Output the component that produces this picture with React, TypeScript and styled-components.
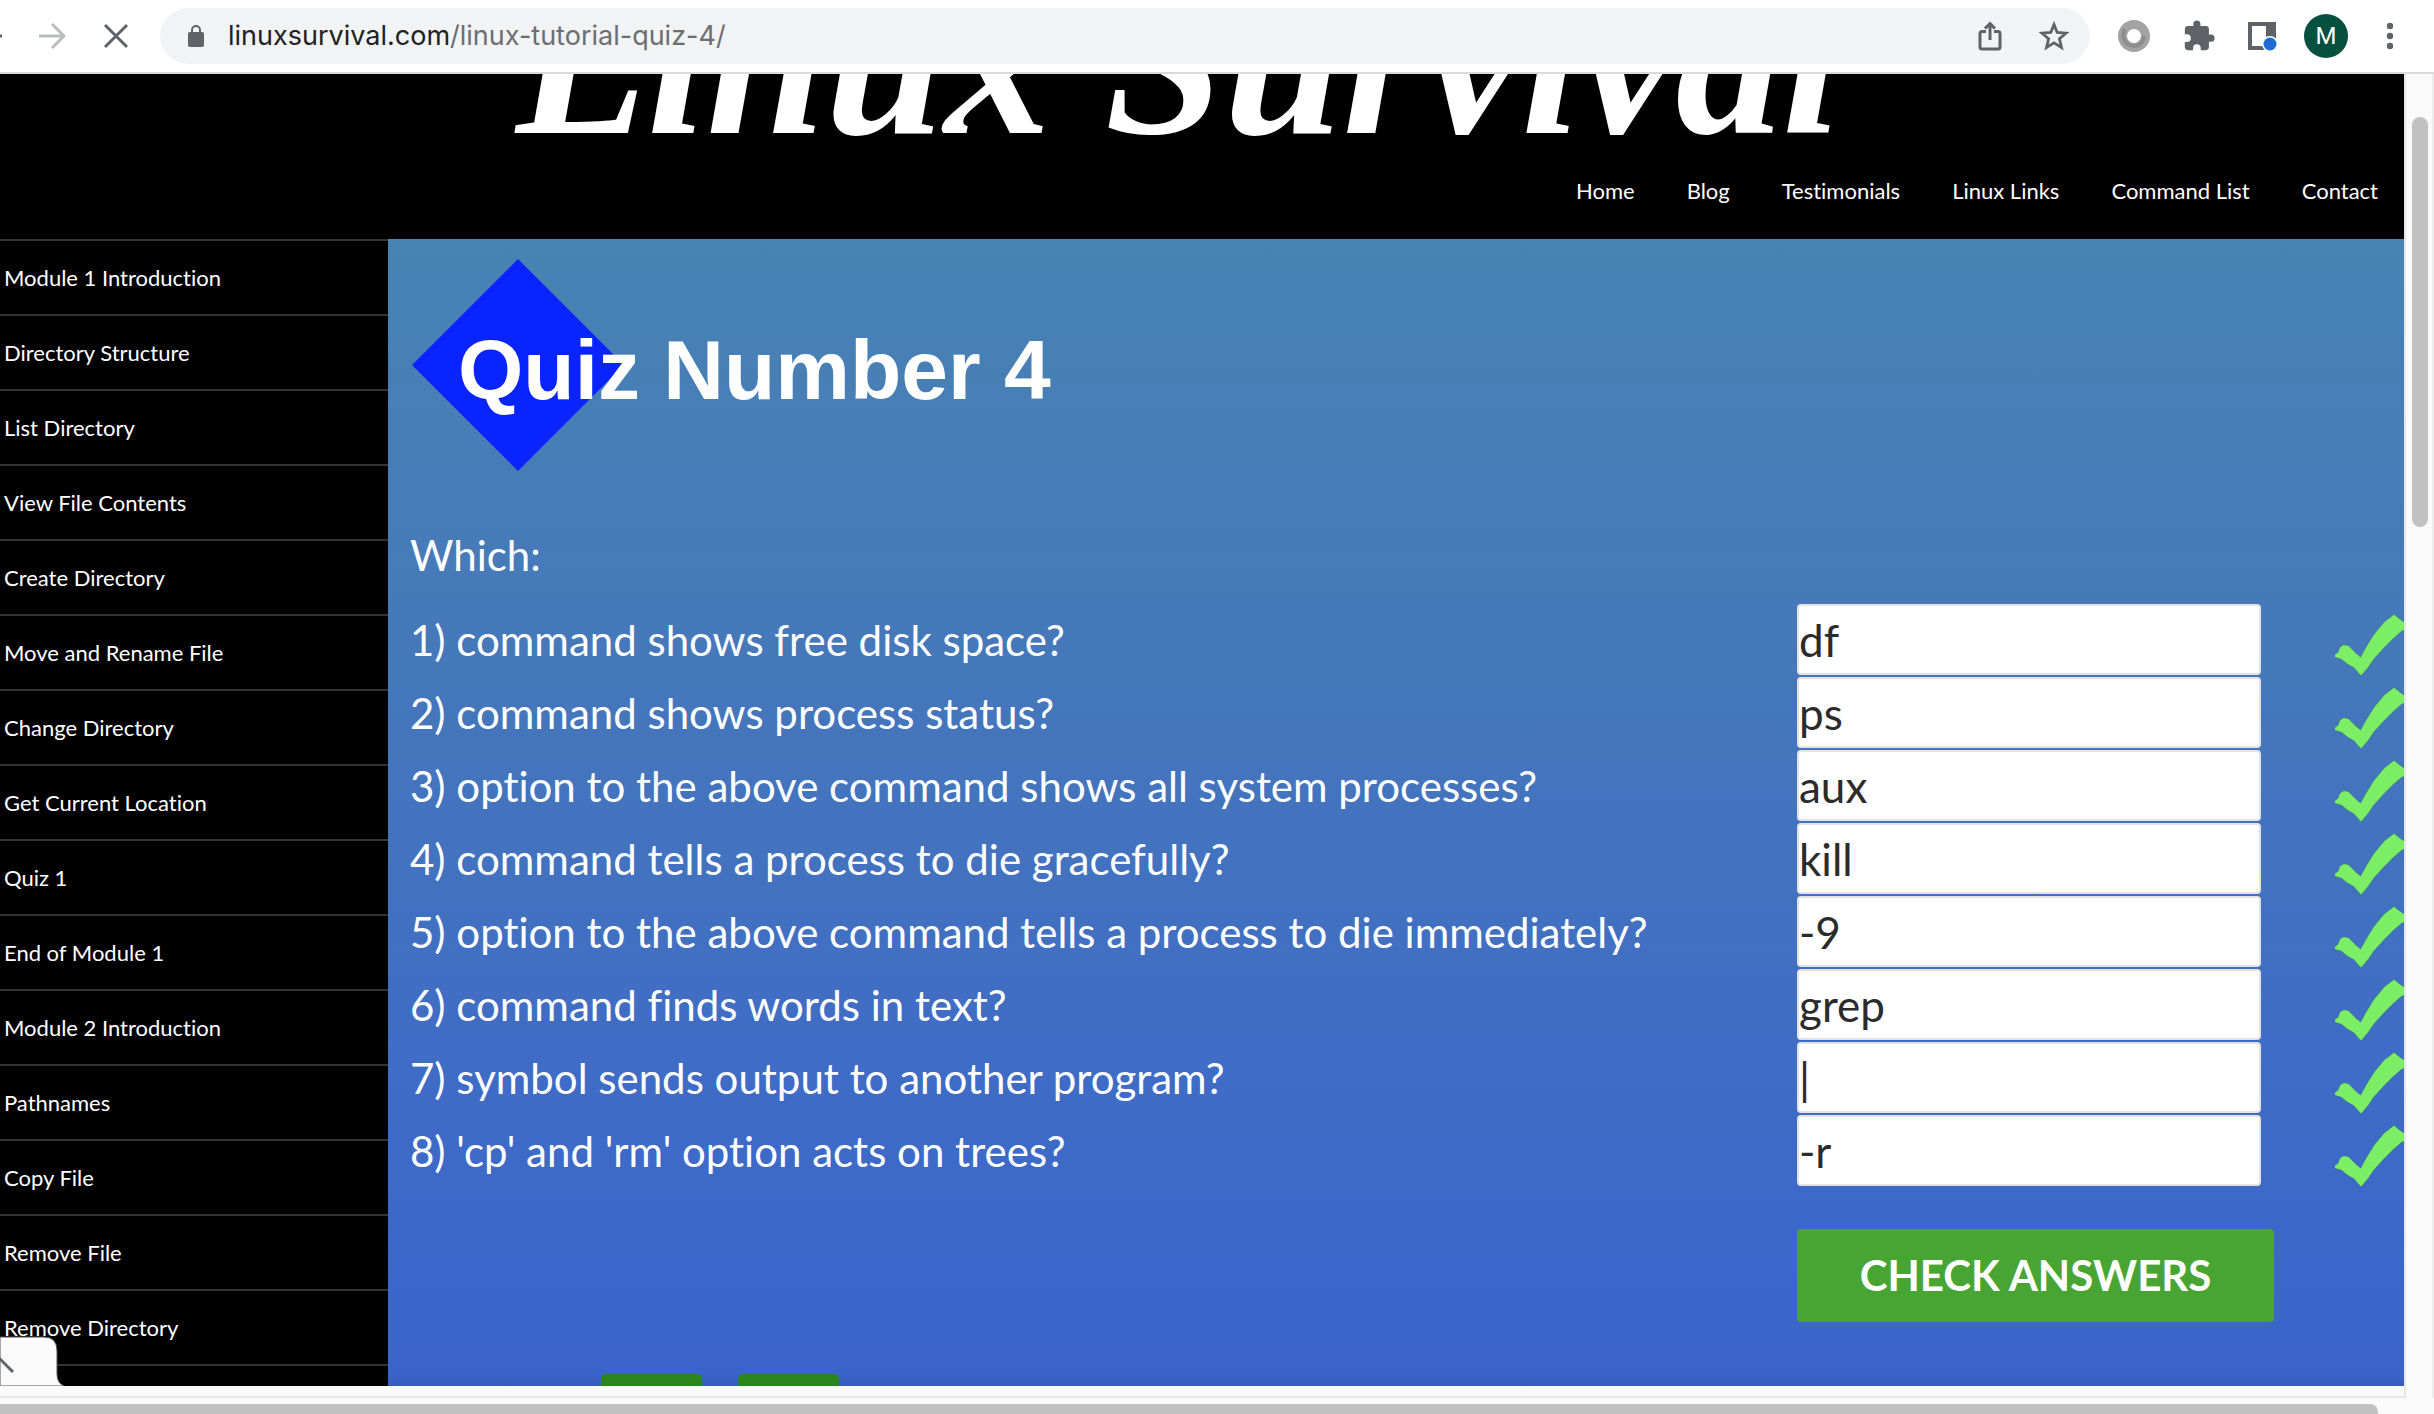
import React from "react";
import styled, { createGlobalStyle } from "styled-components";

const GlobalStyle = createGlobalStyle`
  *, *::before, *::after { box-sizing: border-box; }
  html, body { margin: 0; background: #fff; }
  body {
    font-family: Lato, "Open Sans", sans-serif;
    font-variant-ligatures: no-common-ligatures;
  }
`;

const Window = styled.div`
  display: flex;
  flex-direction: column;
  height: 100vh;
  overflow: hidden;
  background: #fafafa;
`;

/* ---------- browser toolbar ---------- */

const Toolbar = styled.div`
  flex: none;
  display: flex;
  align-items: center;
  height: 74px;
  padding-right: 40px;
  border-bottom: 2px solid #dadada;
  background: #fff;
`;

const IconButton = styled.button<{ $width: number }>`
  flex: none;
  display: flex;
  align-items: center;
  justify-content: center;
  width: ${(p) => p.$width}px;
  height: 56px;
  padding: 0;
  border: 0;
  background: none;
  color: #5f6368;
`;

const AddressBar = styled.div`
  flex: 1;
  display: flex;
  align-items: center;
  min-width: 0;
  height: 56px;
  margin: 0 12px 0 6px;
  padding: 0 4px 0 28px;
  border-radius: 28px;
  background: #f1f3f4;
`;

const Url = styled.span`
  flex: 1;
  margin-left: 24px;
  font: 27px/36px Inter, Roboto, sans-serif;
  color: #6b6e72;
  white-space: nowrap;
`;

const Domain = styled.span`
  color: #202124;
`;

const Avatar = styled.button`
  flex: none;
  width: 44px;
  height: 44px;
  margin: 0 38px 0 10px;
  padding: 0;
  border: 0;
  border-radius: 50%;
  background: #074f3f;
  color: #fff;
  font: 24px/44px Roboto, sans-serif;
`;

/* ---------- viewport with its scrollbars ---------- */

const Viewport = styled.div`
  flex: 1;
  display: flex;
  min-height: 0;
`;

const PageFrame = styled.div`
  position: relative;
  flex: 1;
  display: flex;
  flex-direction: column;
  min-width: 0;
  padding-bottom: 10px;
  border: solid #e8e8e8;
  border-width: 0 2px 2px 0;
`;

const Page = styled.div`
  flex: 1;
  display: flex;
  flex-direction: column;
  min-height: 0;
  overflow: hidden;
  background: #000;
`;

const VerticalTrack = styled.div`
  flex: none;
  width: 28px;
  padding: 43px 4px 0 6px;
  border-right: 2px solid #ececec;
`;

const VerticalThumb = styled.div`
  width: 16px;
  height: 410px;
  border-radius: 8px;
  background: #c1c1c1;
`;

const HorizontalTrack = styled.div`
  flex: none;
  height: 16px;
  padding: 6px 56px 0 0;
  overflow: hidden;
`;

const HorizontalThumb = styled.div`
  height: 16px;
  border-radius: 0 8px 8px 0;
  background: #c1c1c1;
`;

/* ---------- site header ---------- */

const SiteHeader = styled.header`
  flex: none;
  display: flex;
  flex-direction: column;
  justify-content: space-between;
  height: 165px;
  overflow: hidden;
`;

const Banner = styled.h1`
  margin: -120px 0 0;
  padding-right: 46px;
  text-align: center;
  font: italic bold 214px/214px "Liberation Serif", serif;
  color: #fff;
  white-space: nowrap;
`;

const Nav = styled.nav`
  display: flex;
  justify-content: flex-end;
  gap: 52px;
  padding: 0 26px 34px 0;
`;

const NavLink = styled.a`
  font-size: 22px;
  line-height: 28px;
  color: #fff;
  text-decoration: none;
`;

/* ---------- body ---------- */

const Columns = styled.div`
  flex: 1;
  display: flex;
  min-height: 0;
`;

const Sidebar = styled.nav`
  flex: none;
  width: 388px;
  overflow: hidden;
`;

const SideList = styled.ul`
  margin: 0;
  padding: 0;
  list-style: none;
`;

const SideItem = styled.li`
  height: 75px;
  border-top: 2px solid #333;
`;

const SideLink = styled.a`
  display: block;
  padding-left: 4px;
  font-size: 22px;
  line-height: 73px;
  color: #fff;
  text-decoration: none;
`;

const Main = styled.main`
  flex: 1;
  display: flex;
  flex-direction: column;
  min-width: 0;
  overflow: hidden;
  padding: 20px 0 0 22px;
  background: linear-gradient(#4883b3, #4679b9 32%, #4270c1 60%, #3b66cb 90%, #3a64ca 99%, #355dbc);
  color: #fff;
`;

const QuizTitle = styled.h2`
  display: flex;
  align-items: center;
  height: 212px;
  margin: 0 0 58px 2px;
`;

const Diamond = styled.svg`
  flex: none;
  width: 212px;
  height: 212px;
`;

const QuizTitleText = styled.span`
  margin-left: -166px;
  padding-top: 10px;
  font: bold 84px/92px "Liberation Sans", Arial, sans-serif;
  white-space: nowrap;
`;

const Lead = styled.p`
  margin: 0 0 22px;
  font-size: 42px;
  line-height: 53px;
`;

const QuizForm = styled.form`
  display: grid;
  grid-template-columns: minmax(0, 1fr) 464px 143px;
  grid-auto-rows: 71px;
  row-gap: 2px;
`;

const Question = styled.label`
  font-size: 42px;
  line-height: 73px;
  white-space: nowrap;
`;

const Answer = styled.input`
  width: 100%;
  height: 71px;
  padding: 0;
  border: 2px solid #e3e3e3;
  border-radius: 4px;
  background: #fff;
  color: #2b2b2b;
  font: 44px/60px Lato, sans-serif;
  outline: 0;
`;

const CheckMark = styled.svg`
  justify-self: end;
  width: 69px;
  height: 71px;
`;

const CheckButton = styled.button`
  grid-column: 2 / 4;
  justify-self: start;
  width: 477px;
  height: 93px;
  margin-top: 41px;
  padding: 0;
  border: 0;
  border-radius: 4px;
  background: #49a533;
  color: #fff;
  font: bold 42px/93px Lato, sans-serif;
`;

const Pager = styled.div`
  display: flex;
  gap: 36px;
  margin: 115px 0 0 191px;
`;

const PagerButton = styled.button`
  width: 101px;
  height: 60px;
  border: 0;
  border-radius: 5px;
  background: #2a861c;
`;

const StatusCorner = styled.svg`
  position: absolute;
  left: 0;
  bottom: 10px;
  width: 66px;
  height: 50px;
`;

const navLinks = ["Home", "Blog", "Testimonials", "Linux Links", "Command List", "Contact"];

const modules = [
  "Module 1 Introduction",
  "Directory Structure",
  "List Directory",
  "View File Contents",
  "Create Directory",
  "Move and Rename File",
  "Change Directory",
  "Get Current Location",
  "Quiz 1",
  "End of Module 1",
  "Module 2 Introduction",
  "Pathnames",
  "Copy File",
  "Remove File",
  "Remove Directory",
  "",
];

const questions = [
  { text: "1) command shows free disk space?", answer: "df" },
  { text: "2) command shows process status?", answer: "ps" },
  { text: "3) option to the above command shows all system processes?", answer: "aux" },
  { text: "4) command tells a process to die gracefully?", answer: "kill" },
  { text: "5) option to the above command tells a process to die immediately?", answer: "-9" },
  { text: "6) command finds words in text?", answer: "grep" },
  { text: "7) symbol sends output to another program?", answer: "|" },
  { text: "8) 'cp' and 'rm' option acts on trees?", answer: "-r" },
];

function BrowserToolbar() {
  return (
    <Toolbar>
      <IconButton $width={26} aria-label="Back">
        <svg width="26" height="26" viewBox="0 0 26 26" stroke="#5f6368" strokeWidth="3" fill="none">
          <path d="M-24 13H2" />
        </svg>
      </IconButton>
      <IconButton $width={52} aria-label="Forward">
        <svg width="28" height="28" viewBox="0 0 28 28" stroke="#b9bbbd" strokeWidth="3" fill="none">
          <path d="M1 14H25M14 2L26 14L14 26" />
        </svg>
      </IconButton>
      <IconButton $width={76} aria-label="Stop loading">
        <svg width="26" height="26" viewBox="0 0 26 26" stroke="#5f6368" strokeWidth="3" fill="none">
          <path d="M2 2L24 24M24 2L2 24" />
        </svg>
      </IconButton>
      <AddressBar>
        <svg width="16" height="22" viewBox="0 0 16 22">
          <rect y="7" width="16" height="15" rx="2" fill="#5f6368" />
          <path d="M4 8V5a4 4 0 0 1 8 0v3" fill="none" stroke="#5f6368" strokeWidth="2" />
        </svg>
        <Url>
          <Domain>linuxsurvival.com</Domain>/linux-tutorial-quiz-4/
        </Url>
        <IconButton $width={64} aria-label="Share">
          <svg width="24" height="30" viewBox="0 0 24 30" fill="none" stroke="#5f6368" strokeWidth="3">
            <path d="M8 10.500H4Q2 10.500 2 12.500V26Q2 28 4 28H20Q22 28 22 26V12.500Q22 10.500 20 10.500H16" />
            <path d="M12 19V3M7 7.500L12 2.500L17 7.500" />
          </svg>
        </IconButton>
        <IconButton $width={64} aria-label="Bookmark">
          <svg width="30" height="30" viewBox="0 0 30 30" fill="none" stroke="#5f6368" strokeWidth="2.800">
            <path d="M15 3.500L18.200 11.500L27 12.200L20.400 17.800L22.500 26.500L15 21.800L7.500 26.500L9.600 17.800L3 12.200L11.800 11.500Z" />
          </svg>
        </IconButton>
      </AddressBar>
      <IconButton $width={64} aria-label="Extension">
        <svg width="32" height="32" viewBox="0 0 32 32" fill="none">
          <circle cx="16" cy="16" r="11.500" stroke="#a3a3a3" strokeWidth="9" />
          <path d="M7 9A11 11 0 0 0 17 26Q25 25 26 16" stroke="#8d8d8d" strokeWidth="4" />
        </svg>
      </IconButton>
      <IconButton $width={66} aria-label="Extensions">
        <svg width="34" height="34" viewBox="0 0 24 24" fill="#5f6368">
          <path d="M20.500 11H19V7c0-1.100-.9-2-2-2h-4V3.500a2.500 2.500 0 0 0-5 0V5H4c-1.100 0-2 .9-2 2v3.800h1.500a2.700 2.700 0 0 1 0 5.400H2V20c0 1.100.9 2 2 2h3.800v-1.500a2.700 2.700 0 0 1 5.400 0V22H17c1.100 0 2-.9 2-2v-4h1.500a2.500 2.500 0 0 0 0-5z" />
        </svg>
      </IconButton>
      <IconButton $width={62} aria-label="Side panel">
        <svg width="30" height="30" viewBox="0 0 30 30">
          <path d="M0 1H28V29H0Z" fill="#5f6368" />
          <rect x="4" y="5" width="14" height="20" fill="#fff" />
          <circle cx="22" cy="23" r="8" fill="#fff" />
          <circle cx="22" cy="23" r="6.500" fill="#1f6bd6" />
        </svg>
      </IconButton>
      <Avatar>M</Avatar>
      <IconButton $width={8} aria-label="Menu">
        <svg width="8" height="28" viewBox="0 0 8 28" fill="#5f6368">
          <circle cx="4" cy="4" r="3.200" />
          <circle cx="4" cy="14" r="3.200" />
          <circle cx="4" cy="24" r="3.200" />
        </svg>
      </IconButton>
    </Toolbar>
  );
}

const tickShape =
  "M0 52L4 49L6 44L9 42L13 43L20 50L26 55L32 44L40 31L50 19L59 12L64 16L70 20V24L65 27L57 34L48 43L38 54L32 63L26 70L20 63L13 59L7 54Z";

function Tick() {
  return (
    <CheckMark viewBox="0 0 69 71" aria-hidden="true">
      <path d={tickShape} fill="none" stroke="#3f8f4d" strokeWidth="3" strokeDasharray="3 2" />
      <path d={tickShape} fill="#7bee66" stroke="#7bee66" strokeWidth="2" />
    </CheckMark>
  );
}

export default function App() {
  return (
    <Window>
      <GlobalStyle />
      <BrowserToolbar />
      <Viewport>
        <PageFrame>
          <Page>
            <SiteHeader>
              <Banner>Linux Survival</Banner>
              <Nav>
                {navLinks.map((name) => (
                  <NavLink key={name} href="#">{name}</NavLink>
                ))}
              </Nav>
            </SiteHeader>
            <Columns>
              <Sidebar>
                <SideList>
                  {modules.map((name) => (
                    <SideItem key={name}>{name && <SideLink href="#">{name}</SideLink>}</SideItem>
                  ))}
                </SideList>
              </Sidebar>
              <Main>
                <QuizTitle>
                  <Diamond viewBox="0 0 212 212" aria-hidden="true">
                    <path d="M106 0L212 106L106 212L0 106Z" fill="#0a24ff" />
                  </Diamond>
                  <QuizTitleText>Quiz Number 4</QuizTitleText>
                </QuizTitle>
                <Lead>Which:</Lead>
                <QuizForm onSubmit={(e) => e.preventDefault()}>
                  {questions.map((q, i) => (
                    <React.Fragment key={q.text}>
                      <Question htmlFor={`answer-${i}`}>{q.text}</Question>
                      <Answer id={`answer-${i}`} type="text" defaultValue={q.answer} />
                      <Tick />
                    </React.Fragment>
                  ))}
                  <CheckButton type="submit">CHECK ANSWERS</CheckButton>
                </QuizForm>
                <Pager>
                  <PagerButton aria-label="Previous" />
                  <PagerButton aria-label="Next" />
                </Pager>
              </Main>
            </Columns>
          </Page>
          <StatusCorner viewBox="0 0 66 50" aria-hidden="true">
            <path d="M0 1H44Q57 1 57 15V38Q57 47 64 50H0Z" fill="#fafafa" stroke="#555" strokeWidth="1" />
            <path d="M-2 21L13 36" stroke="#5f6368" strokeWidth="3" />
          </StatusCorner>
        </PageFrame>
        <VerticalTrack>
          <VerticalThumb />
        </VerticalTrack>
      </Viewport>
      <HorizontalTrack>
        <HorizontalThumb />
      </HorizontalTrack>
    </Window>
  );
}
